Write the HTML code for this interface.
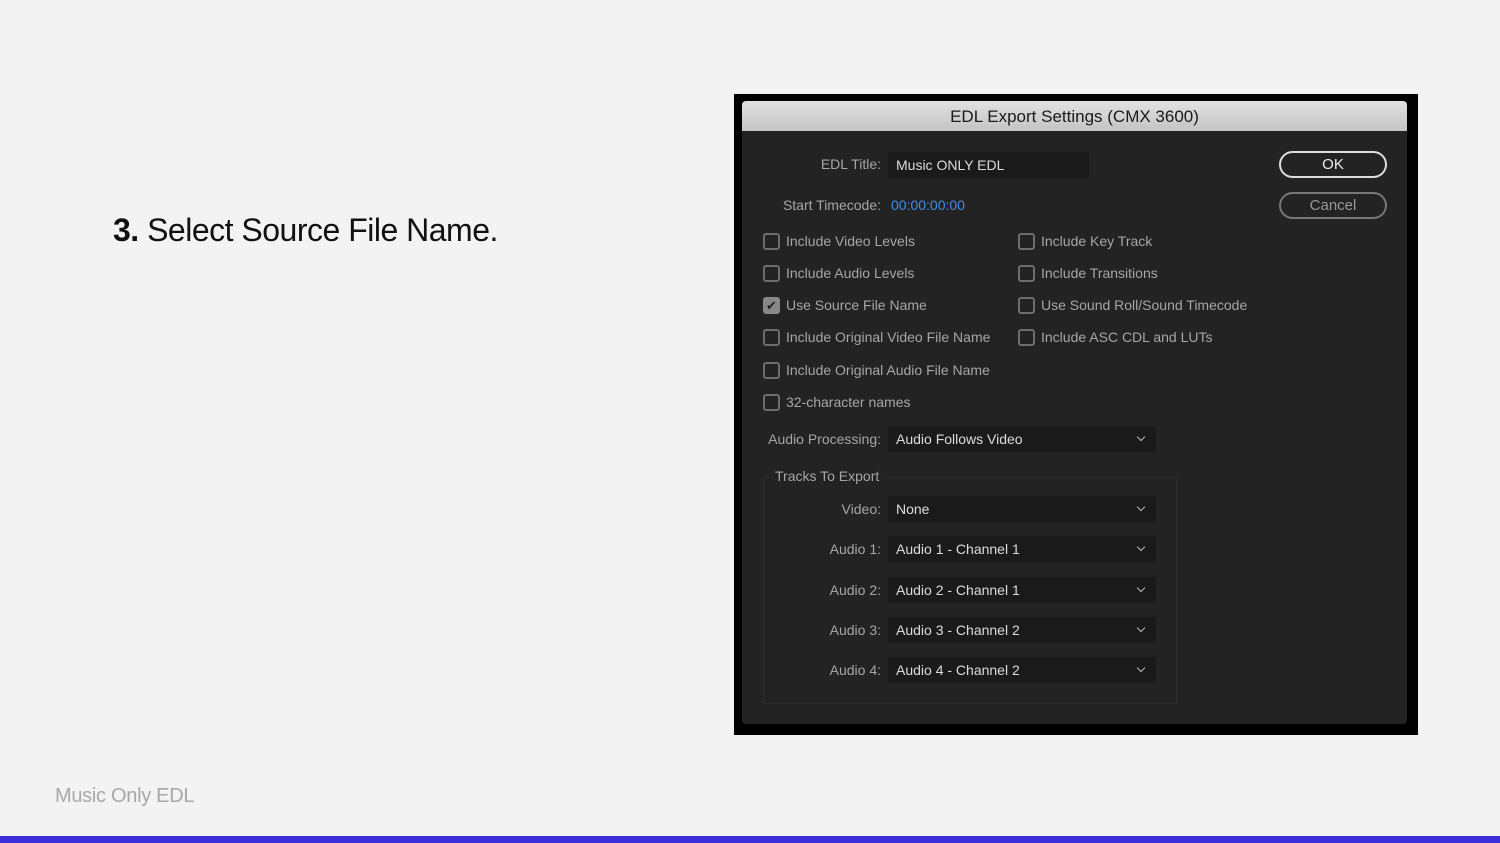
<!DOCTYPE html>
<html><head><style>
*{margin:0;padding:0;box-sizing:border-box}
body{width:1500px;height:843px;background:#f3f3f3;position:relative;overflow:hidden;font-family:"Liberation Sans",sans-serif}
.a{position:absolute}
.h{left:113px;top:212px;font-size:32px;color:#111;letter-spacing:-0.5px}
.foot{left:55px;top:785px;font-size:20px;color:#a8a8a8;letter-spacing:-0.3px}
.bar{left:0;top:836px;width:1500px;height:7px;background:#3c2fd9}
.frame{left:734px;top:94px;width:684px;height:641px;background:#000}
.dlg{left:742px;top:101px;width:665px;height:623px;background:#232323;border-radius:4px}
.tb{left:742px;top:101px;width:665px;height:30px;background:linear-gradient(#e2e2e2,#c4c4c4);border-radius:4px 4px 0 0;text-align:center;font-size:17px;line-height:31px;color:#1a1a1a}
.t{font-size:14px;color:#a6a6a6;white-space:nowrap}
.lbl{text-align:right;width:140px}
.in{background:#1a1a1a;border-radius:2px;color:#dcdcdc;font-size:14px;padding-left:8px;line-height:26px;height:26px}
.sel{left:888px;width:268px}
.sel:after{content:"";position:absolute;right:12px;top:8px;width:5px;height:5px;border-right:1.5px solid #bbb;border-bottom:1.5px solid #bbb;transform:rotate(45deg)}
.cb{width:17px;height:17px;border:2px solid #6d6d6d;border-radius:3px}
.btn{left:1279px;width:108px;height:27px;border-radius:14px;text-align:center;line-height:24px;font-size:15px}
</style></head><body>
<div class="a h"><b>3.</b> Select Source File Name.</div>
<div class="a foot">Music Only EDL</div>
<div class="a bar"></div>
<div class="a frame"></div>
<div class="a dlg"></div>
<div class="a tb">EDL Export Settings (CMX 3600)</div>

<div class="a t lbl" style="left:741px;top:156px">EDL Title:</div>
<div class="a in" style="left:888px;top:152px;width:201px">Music ONLY EDL</div>
<div class="a t lbl" style="left:741px;top:197px">Start Timecode:</div>
<div class="a t" style="left:891px;top:197px;color:#3f8fe8">00:00:00:00</div>
<div class="a btn" style="top:151px;border:2px solid #ddd;color:#eee">OK</div>
<div class="a btn" style="top:192px;border:2px solid #777;color:#999">Cancel</div>

<div class="a cb" style="left:763px;top:233px"></div><div class="a t" style="left:786px;top:233px">Include Video Levels</div>
<div class="a cb" style="left:763px;top:265px"></div><div class="a t" style="left:786px;top:265px">Include Audio Levels</div>
<div class="a cb" style="left:763px;top:297px;background:#888;border-color:#888;color:#222;font-size:13px;line-height:13px;text-align:center">✔</div><div class="a t" style="left:786px;top:297px">Use Source File Name</div>
<div class="a cb" style="left:763px;top:329px"></div><div class="a t" style="left:786px;top:329px">Include Original Video File Name</div>
<div class="a cb" style="left:763px;top:362px"></div><div class="a t" style="left:786px;top:362px">Include Original Audio File Name</div>
<div class="a cb" style="left:763px;top:394px"></div><div class="a t" style="left:786px;top:394px">32-character names</div>
<div class="a cb" style="left:1018px;top:233px"></div><div class="a t" style="left:1041px;top:233px">Include Key Track</div>
<div class="a cb" style="left:1018px;top:265px"></div><div class="a t" style="left:1041px;top:265px">Include Transitions</div>
<div class="a cb" style="left:1018px;top:297px"></div><div class="a t" style="left:1041px;top:297px">Use Sound Roll/Sound Timecode</div>
<div class="a cb" style="left:1018px;top:329px"></div><div class="a t" style="left:1041px;top:329px">Include ASC CDL and LUTs</div>

<div class="a t lbl" style="left:741px;top:431px">Audio Processing:</div>
<div class="a in sel" style="top:426px">Audio Follows Video</div>

<div class="a" style="left:763px;top:477px;width:414px;height:227px;border:1px solid #2e2e2e"></div>
<div class="a t" style="left:770px;top:468px;background:#232323;padding:0 5px">Tracks To Export</div>

<div class="a t lbl" style="left:741px;top:501px">Video:</div>
<div class="a in sel" style="top:496px">None</div>
<div class="a t lbl" style="left:741px;top:541px">Audio 1:</div>
<div class="a in sel" style="top:536px">Audio 1 - Channel 1</div>
<div class="a t lbl" style="left:741px;top:582px">Audio 2:</div>
<div class="a in sel" style="top:577px">Audio 2 - Channel 1</div>
<div class="a t lbl" style="left:741px;top:622px">Audio 3:</div>
<div class="a in sel" style="top:617px">Audio 3 - Channel 2</div>
<div class="a t lbl" style="left:741px;top:662px">Audio 4:</div>
<div class="a in sel" style="top:657px">Audio 4 - Channel 2</div>
</body></html>
